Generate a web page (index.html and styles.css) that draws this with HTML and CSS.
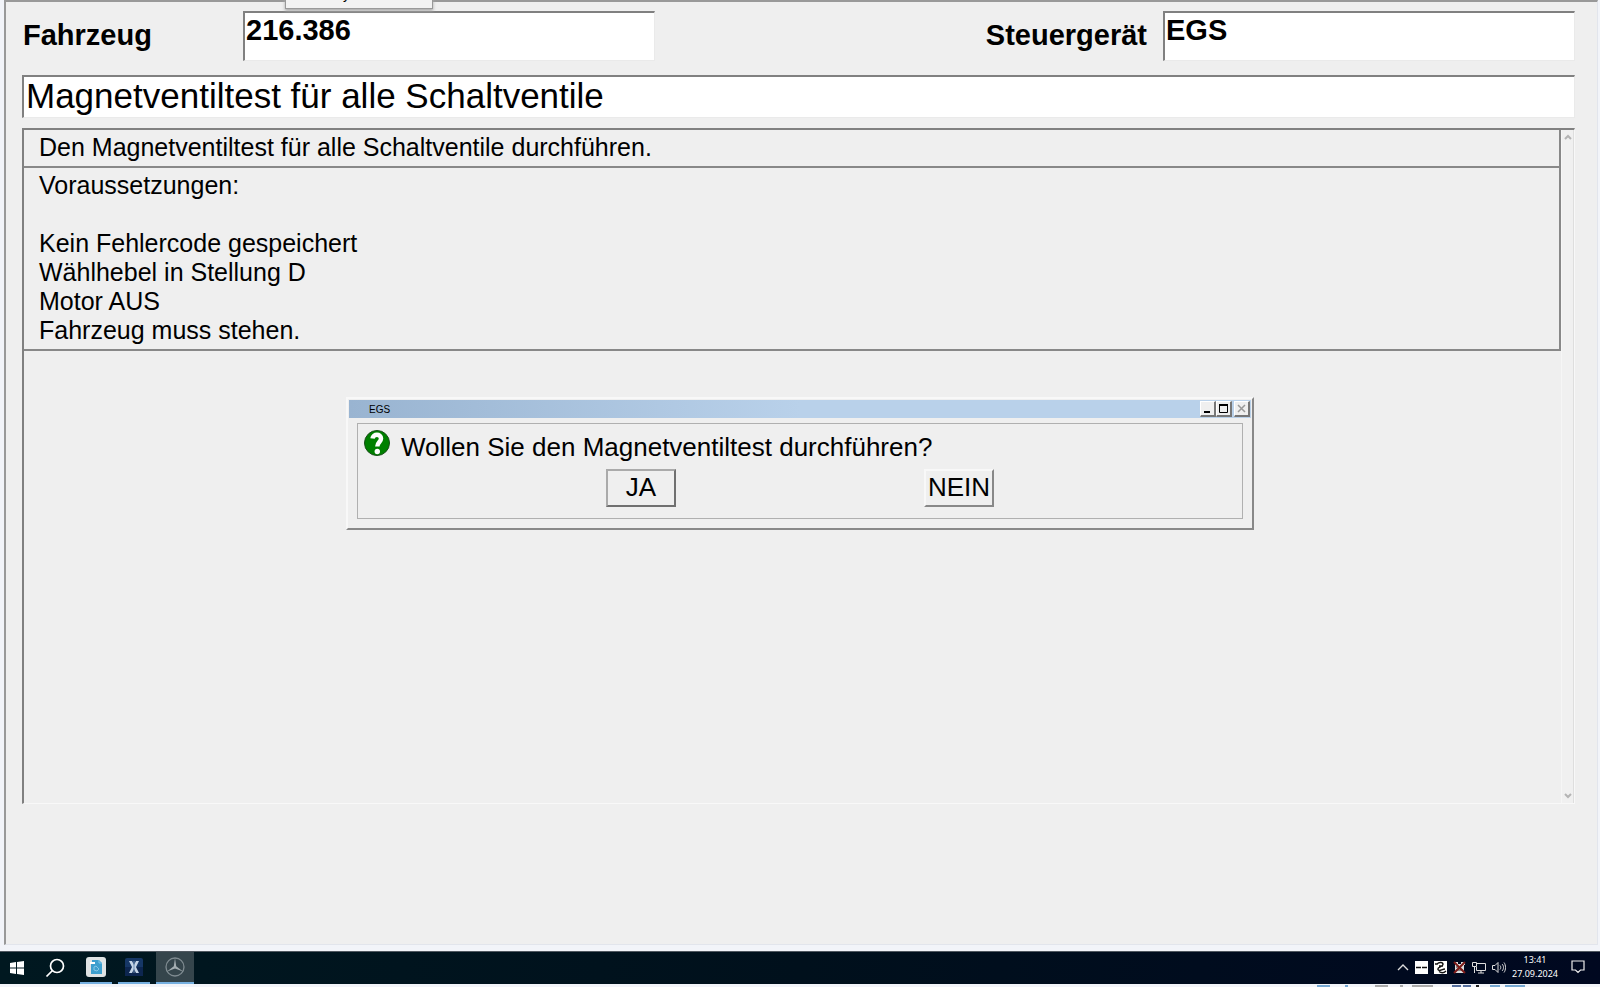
FILE: index.html
```html
<!DOCTYPE html>
<html lang="de">
<head>
  <meta charset="utf-8">
  <title>Magnetventiltest</title>
  <link rel="stylesheet" href="styles.css">
</head>
<body>
  <div class="desktop">
    <main class="window">
      <div class="header">
        <div class="field">
          <label class="field-label" for="vehicle">Fahrzeug</label>
          <input class="field-input" id="vehicle" type="text" value="216.386">
        </div>
        <div class="field field-right">
          <label class="field-label" for="ecu">Steuergerät</label>
          <input class="field-input" id="ecu" type="text" value="EGS">
        </div>
      </div>
      <h1 class="title">Magnetventiltest für alle Schaltventile</h1>
      <div class="panel">
        <div class="panel-content">
          <div class="panel-row">Den Magnetventiltest für alle Schaltventile durchführen.</div>
          <div class="panel-row">
            <p>Voraussetzungen:</p>
            <br>
            <p>Kein Fehlercode gespeichert</p>
            <p>Wählhebel in Stellung D</p>
            <p>Motor AUS</p>
            <p>Fahrzeug muss stehen.</p>
          </div>
        </div>
        <div class="scrollbar">
          <svg width="8" height="6" viewBox="0 0 8 6"><path d="M1 5L4 2L7 5"/></svg>
          <svg width="8" height="6" viewBox="0 0 8 6"><path d="M1 1L4 4L7 1"/></svg>
        </div>
      </div>
    </main>

    <footer class="taskbar">
      <div class="apps">
        <button class="app start" aria-label="Start">
          <svg width="14" height="14" viewBox="0 0 14 14"><path fill="#fff" d="M0 2L6 1V6.500H0ZM7 1L14 0V6.500H7ZM0 7.500H6V13L0 12ZM7 7.500H14V14L7 13Z"/></svg>
        </button>
        <button class="app search" aria-label="Suche">
          <svg width="20" height="20" viewBox="0 0 20 20" fill="none" stroke="#fff" stroke-width="1.700"><circle cx="12" cy="8" r="6.500"/><path d="M7.500 12.500L1.500 18.500"/></svg>
        </button>
        <button class="app open" aria-label="Dokumente">
          <svg width="20" height="20" viewBox="0 0 20 20"><rect width="20" height="20" rx="3" fill="#dfe3e4"/><path d="M6 3H13L16 6V17H5V7H6Z" fill="#3d9fce"/><path d="M4 5H9V7H4Z" fill="#fff"/><path d="M8 10L10 9L13 12L11 14L8 13ZM13 3V6H16" fill="none" stroke="#83c6e6"/></svg>
        </button>
        <button class="app open" aria-label="Xentry">
          <svg width="18" height="18" viewBox="0 0 18 18"><rect width="18" height="18" rx="2" fill="#163766"/><path d="M0 9H18V18H0Z" fill="#0d2650"/><path d="M4 3H7L9 7L11 3H14L11 9L14 15H11L9 11L7 15H4L7 9Z" fill="#c4d4e6"/><path d="M9 3V15" stroke="#6f8fb4"/></svg>
        </button>
        <button class="app open active" aria-label="Diagnose">
          <svg width="20" height="20" viewBox="0 0 20 20"><circle cx="10" cy="10" r="9" fill="none" stroke="#7f8b91" stroke-width="1.300"/><path d="M10 1L11.200 9.300L18 14.500L10 11.500L2 14.500L8.800 9.300Z" fill="#a5aeb2"/></svg>
        </button>
      </div>
      <div class="tray">
        <svg width="12" height="8" viewBox="0 0 12 8" fill="none" stroke="#ddd" stroke-width="1.400"><path d="M1 7L6 2L11 7"/></svg>
        <svg width="13" height="13" viewBox="0 0 13 13"><rect width="13" height="13" fill="#fff"/><path d="M1 6.500H6M7 6.500H12" stroke="#111" stroke-width="1.500"/></svg>
        <svg width="13" height="13" viewBox="0 0 13 13"><rect width="13" height="13" fill="#fff"/><path d="M1 3H4M3 3C5 1 9 1 9 3.500S3 6 4 8.500S8 8 11 8M5 10.500C7 12 10 12 12 10M5 5H9" fill="none" stroke="#111" stroke-width="1.400"/></svg>
        <svg width="13" height="13" viewBox="0 0 13 13"><path d="M2 1H5V3H8V1H12V4H11V12H2Z" fill="#ddd"/><path d="M3 9H10M3 6H7" stroke="#333"/><path d="M1 1L12 12M12 1L1 12" stroke="#7c1a18" stroke-width="2"/></svg>
        <svg width="14" height="13" viewBox="0 0 14 13" fill="none" stroke="#ddd"><path d="M5 2.500H13.500V9.500H4.500V6M9 9.500V12M6 12H12M.5 1.500H4.500V5.500H.5ZM2.500 5.500V12"/></svg>
        <svg width="14" height="13" viewBox="0 0 14 13" fill="none" stroke="#ddd"><path d="M.5 4.500H3L6 1.500V11.500L3 8.500H.5ZM8 4.500C9 5.500 9 7.500 8 8.500M10 3C12 5 12 8 10 10M12 1.500C14 4 14 9 12 11.500"/></svg>
        <div class="clock"><span>13:41</span><span>27.09.2024</span></div>
        <svg class="notify" width="14" height="14" viewBox="0 0 14 14" fill="none" stroke="#eee" stroke-width="1.200"><path d="M1 1H13V10H9.500L7 12.500L4.500 10H1Z"/></svg>
      </div>
    </footer>
    <div class="edge">
      <svg width="210" height="3" viewBox="0 0 210 3" stroke-width="2"><path d="M60 2H73M85 2H88M97 2H118" stroke="#aaa"/><path d="M2 2H15M30 2H33M175 2H185M190 2H210" stroke="#76a8d2"/><path d="M137 2H146M148 2H156" stroke="#56709f"/><path d="M161 2H164" stroke="#222"/></svg>
    </div>
  </div>

  <div class="popup">y</div>

  <div class="overlay">
    <section class="dialog" role="dialog" aria-labelledby="dialog-title">
      <div class="dialog-bar">
        <span id="dialog-title">EGS</span>
        <div class="dialog-controls">
          <button class="control" aria-label="Minimieren"><svg width="11" height="11" viewBox="0 0 11 11"><path d="M2 9H8" stroke="#000" stroke-width="2"/></svg></button>
          <button class="control" aria-label="Maximieren"><svg width="11" height="11" viewBox="0 0 11 11"><path d="M1.500 2.500H9.500V9.500H1.500Z" fill="none" stroke="#000"/><path d="M1 2H10" stroke="#000" stroke-width="2"/></svg></button>
          <button class="control control-close" aria-label="Schließen" disabled><svg width="11" height="11" viewBox="0 0 11 11"><path d="M2 2L9 9M9 2L2 9" stroke="#999" stroke-width="1.500"/></svg></button>
        </div>
      </div>
      <div class="dialog-body">
        <div class="question">
          <svg width="26" height="26" viewBox="0 0 26 26"><circle cx="13" cy="13" r="12.500" fill="#008000" stroke="#174d17"/><path d="M8.500 8.500C9 3.500 17 3.500 17 8.500C17 12 13.500 12 13.300 16.500" fill="none" stroke="#fff" stroke-width="4.500"/><circle cx="13.300" cy="21.500" r="2.700" fill="#fff"/></svg>
          <p>Wollen Sie den Magnetventiltest durchführen?</p>
        </div>
        <div class="answers">
          <button class="answer answer-default">JA</button>
          <button class="answer">NEIN</button>
        </div>
      </div>
    </section>
  </div>
</body>
</html>
```
FILE: styles.css
```css
* {
  box-sizing: border-box;
}

body {
  margin: 0;
  background-color: #f2f4f9;
  color: #000;
  font-family: "Liberation Sans", Arial, sans-serif;
}

p {
  margin: 0;
}

button {
  padding: 0;
  font-family: inherit;
}

svg {
  display: block;
}

.desktop {
  display: flex;
  flex-direction: column;
  height: 100vh;
}

.window {
  display: flex;
  flex-direction: column;
  flex: 1;
  margin: 0 2px 6px 4px;
  padding: 9px 22px 140px 16px;
  background-color: #efefef;
  border: 2px solid #999;
  border-right: 1px solid #e2e5ec;
  border-bottom: 1px solid #e2e5ec;
}

.header {
  display: flex;
  justify-content: space-between;
}

.field {
  display: flex;
  align-items: center;
}

.field-label {
  width: 221px;
  padding: 0 0 2px 1px;
  font-size: 29px;
  font-weight: bold;
  line-height: 32px;
}

.field-right .field-label {
  width: auto;
  margin-right: 16px;
}

.field-input {
  width: 412px;
  height: 50px;
  padding: 0 1px 12px;
  border: 1px solid #eaeaea;
  border-top: 2px solid #808080;
  border-left: 2px solid #808080;
  border-radius: 0;
  background-color: #fff;
  font-family: inherit;
  font-size: 29px;
  font-weight: bold;
}

.title {
  margin: 14px 0 10px;
  padding: 0 0 2px 2px;
  border: 1px solid #eaeaea;
  border-top: 2px solid #808080;
  border-left: 2px solid #808080;
  background-color: #fff;
  font-size: 35px;
  font-weight: normal;
  line-height: 38px;
}

.panel {
  display: flex;
  flex: 1;
  border: 1px solid #f8f8f8;
  border-top: 2px solid #808080;
  border-left: 2px solid #808080;
  font-size: 25px;
  line-height: 29px;
}

.panel-content {
  flex: 1;
}

.panel-row {
  padding: 3px 15px 4px;
  border-right: 2px solid #888;
  border-bottom: 2px solid #888;
}

.scrollbar {
  display: flex;
  flex-direction: column;
  justify-content: space-between;
  align-items: center;
  width: 13px;
  padding: 4px 0;
  background-color: #f0f0f0;
  border-left: 1px solid #f6f6f6;
  border-right: 1px solid #dedede;
  fill: none;
  stroke: #b4b4b4;
  stroke-width: 2;
}

.taskbar {
  display: flex;
  justify-content: space-between;
  height: 33px;
  background: linear-gradient(to right, #001820, #00101c 50%, #000820);
  border-top: 1px solid #505860;
}

.apps {
  display: flex;
}

.app {
  display: flex;
  align-items: center;
  justify-content: center;
  width: 38px;
  border: 0;
  background: none;
}

.start {
  width: 34px;
}

.search {
  width: 42px;
}

.open {
  margin-left: 4px;
  width: 32px;
  border-bottom: 2px solid #76b0e0;
}

.open + .open {
  margin-left: 6px;
}

.open.active {
  width: 38px;
  background-color: #35454c;
}

.tray {
  display: flex;
  align-items: center;
  gap: 6px;
  padding: 0 15px 2px 0;
  color: #fff;
}

.clock {
  display: flex;
  flex-direction: column;
  align-items: center;
  font-family: "Noto Sans", sans-serif;
  font-size: 9px;
  line-height: 14px;
}

.notify {
  margin-left: 7px;
}

.edge {
  display: flex;
  justify-content: flex-end;
  height: 3px;
  padding-right: 75px;
}

/* lower end of the menu hanging in from above */
.popup {
  position: absolute;
  top: -20px;
  left: 285px;
  width: 148px;
  height: 29px;
  padding: 4px 0 0 57px;
  background-color: #f2f2f2;
  border: 1px solid #999;
  border-top: 0;
  box-shadow: 0 2px 3px #aaa;
  font-size: 14px;
  line-height: 20px;
}

.overlay {
  position: absolute;
  top: 397px;
  left: 0;
  right: 0;
  display: flex;
  justify-content: center;
}

.dialog {
  width: 908px;
  max-width: 100%;
  padding: 1px;
  background-color: #efefef;
  border: 2px solid #888;
  border-top-color: #f8f8f8;
  border-left-color: #f8f8f8;
}

.dialog-bar {
  display: flex;
  align-items: center;
  justify-content: space-between;
  height: 18px;
  padding: 0 1px 0 20px;
  background: linear-gradient(to right, #99b4d1, #b9d1ea 50%);
  font-size: 10px;
}

.dialog-controls {
  display: flex;
}

.control {
  display: flex;
  align-items: center;
  justify-content: center;
  width: 16px;
  height: 16px;
  background-color: #efefef;
  border: 1px solid #fff;
  border-right: 2px solid #777;
  border-bottom: 2px solid #777;
}

.control-close {
  margin-left: 2px;
}

.dialog-body {
  margin: 5px 8px 8px;
  padding: 6px 6px 11px;
  border: 1px solid #b0b0b0;
}

.question {
  display: flex;
  gap: 11px;
  font-size: 26px;
  line-height: 34px;
}

.answers {
  display: flex;
  justify-content: center;
  gap: 248px;
  margin-top: 5px;
}

.answer {
  width: 70px;
  height: 38px;
  padding-bottom: 1px;
  background-color: #efefef;
  border: 2px solid #888;
  border-top-color: #f8f8f8;
  border-left-color: #f8f8f8;
  font-size: 26px;
  white-space: nowrap;
}

.answer-default {
  border-color: #aaa #707070 #707070 #aaa;
}
```
